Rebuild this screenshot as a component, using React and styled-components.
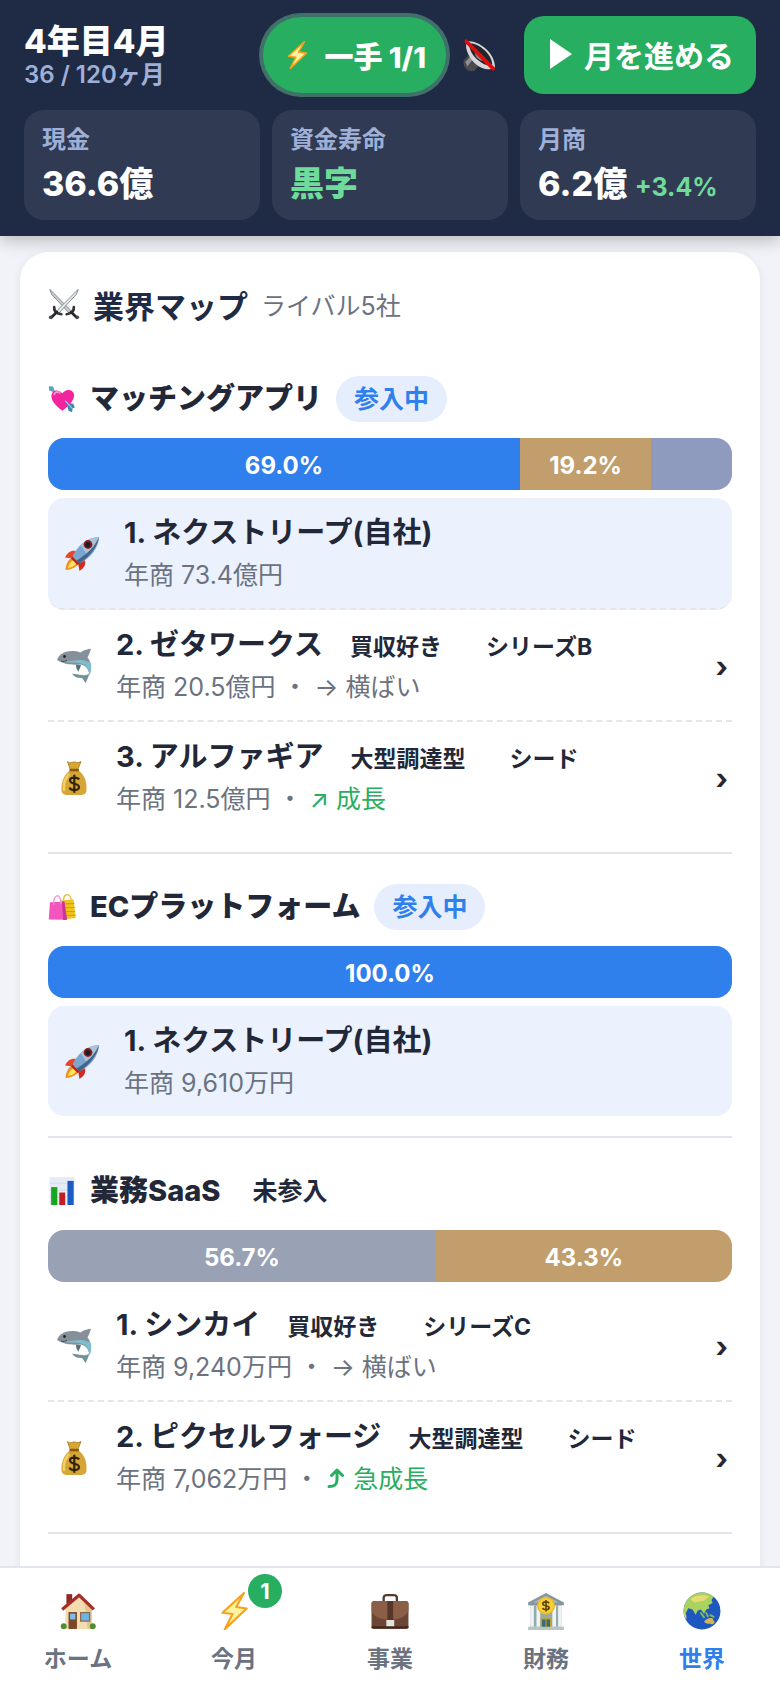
import { useState } from "react";
import styled, { createGlobalStyle } from "styled-components";

const GlobalStyle = createGlobalStyle`
    * {
        box-sizing: border-box;
    }
    body {
        margin: 0;
        background: #f1f3f8;
        color: #232838;
        font-family: Inter, "Noto Sans CJK JP", sans-serif;
    }
    button {
        font-family: inherit;
        color: inherit;
        border: none;
        background: none;
        padding: 0;
        cursor: pointer;
    }
`;

const markets = [
    {
        id: "match",
        icon: "heart",
        name: "マッチングアプリ",
        entered: true,
        shares: [
            { value: 69, color: "#2f80ed" },
            { value: 19.2, color: "#c19e6b" },
            { value: 11.8, color: "#8e9bbf" },
        ],
        companies: [
            { rank: 1, name: "ネクストリープ(自社)", icon: "rocket", sales: "73.4億円", own: true },
            { rank: 2, name: "ゼタワークス", icon: "shark", sales: "20.5億円", type: "買収好き", stage: "シリーズB", trend: "flat" },
            { rank: 3, name: "アルファギア", icon: "money", sales: "12.5億円", type: "大型調達型", stage: "シード", trend: "up" },
        ],
    },
    {
        id: "ec",
        icon: "bags",
        name: "ECプラットフォーム",
        entered: true,
        shares: [{ value: 100, color: "#2f80ed" }],
        companies: [
            { rank: 1, name: "ネクストリープ(自社)", icon: "rocket", sales: "9,610万円", own: true },
        ],
    },
    {
        id: "saas",
        icon: "chart",
        name: "業務SaaS",
        entered: false,
        shares: [
            { value: 56.7, color: "#99a1b5" },
            { value: 43.3, color: "#c19e6b" },
        ],
        companies: [
            { rank: 1, name: "シンカイ", icon: "shark", sales: "9,240万円", type: "買収好き", stage: "シリーズC", trend: "flat" },
            { rank: 2, name: "ピクセルフォージ", icon: "money", sales: "7,062万円", type: "大型調達型", stage: "シード", trend: "surge" },
        ],
    },
];

const trends = {
    flat: { label: "→ 横ばい", color: "#6b7280" },
    up: { label: "↗ 成長", color: "#27ae60" },
    surge: { label: " 急成長", color: "#27ae60", curved: true },
};

const tabs = [
    { id: "home", label: "ホーム", icon: "house" },
    { id: "month", label: "今月", icon: "bolt", badge: 1 },
    { id: "business", label: "事業", icon: "briefcase" },
    { id: "finance", label: "財務", icon: "bank" },
    { id: "world", label: "世界", icon: "globe" },
];

// all drawings share a 36x36 box
const drawings = {
    bolt: (
        <path d="M27.5 1 7 19.6l9.6 1.2L9.2 35.4 30 15.6l-10-1.4z" fill="#fff3a0" stroke="#f6a21c" strokeWidth="2" strokeLinejoin="round" />
    ),
    mute: (
        <>
            <path d="M2 23.5 8 17.5l11 10-5.5 6.8c-3 1.8-7.6.6-9.8-2.4C1.6 29 1 26 2 23.5z" fill="#4a4b4f" />
            <path d="M3.5 25.5 8.5 20l3 2.6-5.8 7.6z" fill="#8d8f94" />
            <path d="M5 4C14 1 35 14 35 31c-6 4-14 2-20-3C9 23 2 12 5 4z" fill="#d4d6da" />
            <path d="M8 6c7-2 24 10 24 22-4 2-10 0-14-4C12 20 7 12 8 6z" fill="#242529" />
            <path d="M14 15c4-1 10 4 11 9-3 1-6.5-.5-8.5-2.5S13.3 17 14 15z" fill="#85878d" />
            <path d="M4.5 3.5 33 32.5" stroke="#e20a0a" strokeWidth="4" strokeLinecap="round" />
        </>
    ),
    swords: (
        <>
            <path d="M2 1.5 26.5 26 24 28.5 4 7z" fill="#c7cdd2" stroke="#7d858c" strokeWidth="1" />
            <path d="M34 1.5 9.5 26l2.5 2.5L32 7z" fill="#e3e8eb" stroke="#7d858c" strokeWidth="1" />
            <path d="M7 21.5c-.5 3.5 1 7 8 8M29 21.5c.5 3.5-1 7-8 8" fill="none" stroke="#303236" strokeWidth="3" strokeLinecap="round" />
            <path d="M10 27 3.5 33.5M26 27l6.5 6.5" stroke="#26282c" strokeWidth="3" strokeLinecap="round" />
            <circle cx="3" cy="33" r="2" fill="#44474c" />
            <circle cx="33" cy="33" r="2" fill="#44474c" />
        </>
    ),
    heart: (
        <>
            <path d="M1 1.5 6.5 2l2 5.5L12 12l-2 1-4.5-4.5L1.5 7z" fill="#5a9fc0" />
            <path d="M18.5 33C9 26.5 3.5 19.5 4.5 12.5 5.3 6.5 14 5 18.5 11 22 4.5 32 4.8 33.5 12c1.2 7.5-7.5 15.5-15 21z" fill="#f2259f" />
            <path d="M8 12c1-3 4.5-4 7-2" fill="none" stroke="#ff8cd0" strokeWidth="2.4" strokeLinecap="round" />
            <path d="M22 20l4 3 6.5 1 2 5-3 .8L31 35l-4.5-2-2-7z" fill="#3c86ab" />
            <path d="M22 20l9 10" stroke="#9bd0e6" strokeWidth="1.5" />
        </>
    ),
    bags: (
        <>
            <path d="M16 9.5 33 8.5 35.5 32 20 34z" fill="#f0c419" />
            <path d="M20 14l14-.5M20 19l14.5-.3M20 24l15-.3M20 29l15.4-.6" stroke="#d79a10" strokeWidth="1.4" />
            <path d="M20 11c-.5-11 9.5-12 9.8-1" fill="none" stroke="#f3bd3c" strokeWidth="1.8" />
            <path d="M2.5 12 21 11l3.5 23.5L1 34z" fill="#f354bd" />
            <path d="M18 11.2 21 11l3.5 23.5-5 .2z" fill="#c93694" />
            <path d="M7.5 15C6 1 16.5-1 16.8 14" fill="none" stroke="#f49ac4" strokeWidth="1.8" />
        </>
    ),
    chart: (
        <>
            <path d="M2 0h32v36H2z" fill="#e6ecf5" />
            <path d="M2 8h32M2 17h32M2 26h32" stroke="#cfd8e6" strokeWidth="1" />
            <path d="M4 13h8v23H4z" fill="#19a51f" />
            <path d="M14.5 20h7.5v16h-7.5z" fill="#c41c22" />
            <path d="M25 5h8v31h-8z" fill="#1b5bc4" />
        </>
    ),
    rocket: (
        <>
            <path d="M12 15C7 14 3.5 16.5 1 21.5l8 1z" fill="#e8452b" />
            <path d="M21 24c1 5-1 8-5.5 11L14 27z" fill="#d42a1c" />
            <path d="M9 21c-4 1.5-7 6-7.5 13C8 33.5 13 31 15 27z" fill="#f58d20" />
            <path d="M9.5 24c-3 1.5-5 4.5-5.5 8 4.5-.5 7-2.5 8.5-5z" fill="#ffe65a" />
            <path d="M35 1C24 1.5 14 8.5 8.5 20.5l7 7C27 22 34.5 12 35 1z" fill="#7aa6cf" />
            <path d="M35 1c-7 .4-13.5 3.2-18.5 8L24 20c6.5-5 10.7-12 11-19z" fill="#a9c3da" />
            <path d="M35 1c-1 9-7.5 18-19.5 26.5l-3-3C24 18 31 10 35 1z" fill="#44648a" />
            <circle cx="24" cy="8.5" r="4.4" fill="#8e1a1a" />
            <circle cx="23.8" cy="8.7" r="2.6" fill="#1c1d26" />
            <path d="m8.5 20.5 7 7-2 1.5-6.5-6.5z" fill="#b3242a" />
        </>
    ),
    shark: (
        <>
            <path d="M1 12C4 4 14 1 24.5 4.5 28 2 32 .8 35 .8c-.8 3-2 6-3.5 8.7C36 15 36 21 33.500 27c-1.500-8-5-10-9.500-10.500-9 .5-15.500 0-23-4.500z" fill="#86909a" />
            <path d="M4 13c8 3 16 0 23 3 4 1.800 6 5.500 6.500 11 2-4 2.300-8.500.5-13-3 0-5-2-9-2-7 0-13 2.500-21 1z" fill="#7cc0cf" />
            <path d="M20 16.5c0 3 .5 5 2.5 7 .8-2.5 2-4 2.5-6.5z" fill="#56707c" />
            <path d="M33.5 25c-2 2-4 2.5-7.5 2-3-.5-6.5-.8-10-1.5 2.5 4 6 5 10 4.5l3.5 5c1.5-3 3-6 4-10z" fill="#74929b" />
            <circle cx="8.5" cy="8.5" r="1.4" fill="#20252a" />
            <path d="M5 13c2.5 1 4.5.5 6-1" fill="none" stroke="#40484f" strokeWidth="1" />
        </>
    ),
    money: (
        <>
            <path d="M11.5 1.5c3 2.5 4 .5 6.5.5s3.5 1.5 7-.5L22 9h-8z" fill="#d9a630" stroke="#a4741b" strokeWidth=".8" />
            <path d="M14 10.5h8.5c7 5 8.5 12.5 8 20-.2 3.5-3 4.5-6 4.5h-13c-3.500 0-6-1.500-6-5C5.200 22 7.500 15.500 14 10.500z" fill="#d6a537" />
            <path d="M12.5 15c-4 4-5 10-4.5 15" fill="none" stroke="#f1d067" strokeWidth="2.5" strokeLinecap="round" />
            <path d="M13.5 9h9.5v2.4h-9.5z" fill="#8a5c14" />
            <path d="M23 19.500c-1-2.500-9-3-9 1s9 2.500 9 6.500-8.500 4-9.500.5M18.300 14.800v18" fill="none" stroke="#332308" strokeWidth="2.2" />
        </>
    ),
    house: (
        <>
            <path d="M7 2h5.5v9H7z" fill="#8e2b27" />
            <path d="M6 14 19 4l12 10v21H6z" fill="#f3ddb0" />
            <path d="M24 9l7 5v21h-4z" fill="#e3c791" />
            <path d="M3 16.5 19 3l14 13.5" fill="none" stroke="#a72c28" strokeWidth="3" strokeLinejoin="round" />
            <path d="M9 19h8v16H9z" fill="#7b4729" />
            <path d="M10.5 20.5h5v5.5h-5z" fill="#7fbce8" />
            <path d="M20.5 19.5H29v8h-8.5z" fill="#6fb3e6" stroke="#8b6b4c" strokeWidth="1.2" />
            <circle cx="4.5" cy="32.5" r="2.8" fill="#4f8d33" />
            <circle cx="32" cy="32.5" r="2.8" fill="#4f8d33" />
        </>
    ),
    briefcase: (
        <>
            <path d="M12 9V5.5C12 3.5 13.5 3 15 3h6.5C23 3 24.5 3.5 24.5 5.5V9" fill="none" stroke="#553a2c" strokeWidth="2.2" />
            <path d="M3 8.5h30c1.5 0 2.5 1 2.5 2.5v22c0 1.2-.8 2-2 2h-31c-1.2 0-2-.8-2-2V11C.5 9.500 1.500 8.500 3 8.500z" fill="#6b4634" />
            <path d="M3 8.5h30c1.5 0 2.5 1 2.5 2.5v7c-4 7-10 8-17.5 8S4 25 .5 18v-7C.5 9.500 1.500 8.500 3 8.500z" fill="#8a5e47" />
            <path d="M15.5 8.5H21V28h-5.5z" fill="#573627" />
            <path d="M14.5 26.5H22v7h-7.5z" fill="#e5e2dc" />
            <path d="M.5 32.5h35v1.8H.5z" fill="#3f281d" />
        </>
    ),
    bank: (
        <>
            <path d="M18 1 35 10v2.5H1V10z" fill="#86979b" />
            <path d="M18 3.5 30 10H6z" fill="#a9b9ba" />
            <path d="M3 12.5h30V33H3z" fill="#93aaae" />
            <path d="M3 13h3.5v20H3zM9 13h3.5v20H9zM24 13h3.5v20H24zM29.5 13H33v20h-3.5z" fill="#f0f3f4" />
            <path d="M13.5 25.5h9V34h-9z" fill="#3d6b70" stroke="#c9a227" strokeWidth="1.3" />
            <path d="M18 26v8" stroke="#c9a227" strokeWidth="1" />
            <path d="M1 33h34v3H1z" fill="#b9c4c6" />
            <circle cx="18" cy="13" r="8.5" fill="#f0b921" />
            <circle cx="18" cy="13" r="7" fill="#f8cf3b" />
            <path d="M21 10.8c-.8-2-6-2-6 .4s6 1.5 6 3.8-5.3 2.5-6.2.3M18 7.5v11" fill="none" stroke="#5b4208" strokeWidth="1.5" />
        </>
    ),
    globe: (
        <>
            <circle cx="18" cy="18" r="17.5" fill="#1d58c0" />
            <path d="M2 11C5 4 12 .5 18 .5c5 0 8 1 11 4l-2 3 1 3-4 2 1 3-3 1-2 4-3-4-3 1-2 4-3-5-4-1-2 4-2 1c-.6-3-.2-6.5 1-9.5z" fill="#a9d25e" />
            <path d="M7 7c4-4 12-5 18-3l-5 4-9 2z" fill="#e5dd74" />
            <path d="M.6 19c2 0 3 3 2.5 7C1.5 24 .6 22 .6 19z" fill="#d8cf62" />
            <path d="M17 20l3 4M22 20l1.5 3M26 22l3 1.5" stroke="#83b95a" strokeWidth="1.8" strokeLinecap="round" />
            <path d="M20 28c2-3 6-4 8-3l2 4c-1 2-3 2-4.500.8-2 .4-4.500.2-5.500-1.800z" fill="#d5b552" />
        </>
    ),
};

function Drawing({ name, size }) {
    return (
        <DrawingSvg viewBox="0 0 36 36" $size={size} aria-hidden="true">
            {drawings[name]}
        </DrawingSvg>
    );
}

function CompanyRow({ company }) {
    const trend = trends[company.trend];

    return (
        <CompanyItem $own={company.own}>
            <CompanyBody as={company.own ? "div" : "button"} $own={company.own}>
                <CompanyIcon>
                    <Drawing name={company.icon} size={36} />
                </CompanyIcon>
                <CompanyText>
                    <CompanyHead>
                        <CompanyName>{company.rank}. {company.name}</CompanyName>
                        {company.type && <Tag>{company.type}</Tag>}
                        {company.stage && <Tag>{company.stage}</Tag>}
                    </CompanyHead>
                    <CompanySales>
                        年商 {company.sales}
                        {trend && (
                            <>
                                {" ・ "}
                                <Trend $color={trend.color}>
                                    {trend.curved && (
                                        <CurvedArrow viewBox="0 0 20 20" aria-hidden="true">
                                            <path d="M3 18.5c6 0 8-2 8-7V2M5.5 7.5 11 2l5.5 5.5" />
                                        </CurvedArrow>
                                    )}
                                    {trend.label}
                                </Trend>
                            </>
                        )}
                    </CompanySales>
                </CompanyText>
                {!company.own && <Chevron>›</Chevron>}
            </CompanyBody>
        </CompanyItem>
    );
}

function App() {
    const [tab, setTab] = useState("world");

    return (
        <Shell>
            <GlobalStyle />
            <Header>
                <HeaderTop>
                    <DateBlock>
                        <DateTitle>4年目4月</DateTitle>
                        <DateSub>36 / 120ヶ月</DateSub>
                    </DateBlock>
                    <MoveButton>
                        <Drawing name="bolt" size={28} />
                        一手 1/1
                    </MoveButton>
                    <SoundButton aria-label="サウンド">
                        <Drawing name="mute" size={34} />
                    </SoundButton>
                    <NextButton>
                        <PlayIcon viewBox="0 0 22 30" aria-hidden="true">
                            <path d="M0 0l22 15L0 30z" fill="#fff" />
                        </PlayIcon>
                        月を進める
                    </NextButton>
                </HeaderTop>
                <Stats>
                    <Stat>
                        <StatLabel>現金</StatLabel>
                        <StatValue>36.6億</StatValue>
                    </Stat>
                    <Stat>
                        <StatLabel>資金寿命</StatLabel>
                        <StatValue $good>黒字</StatValue>
                    </Stat>
                    <Stat>
                        <StatLabel>月商</StatLabel>
                        <StatValue>6.2億 <Growth>+3.4%</Growth></StatValue>
                    </Stat>
                </Stats>
            </Header>

            <Main>
                <Card>
                    <CardHead>
                        <Drawing name="swords" size={32} />
                        <CardTitle>業界マップ</CardTitle>
                        <CardNote>ライバル5社</CardNote>
                    </CardHead>
                    {markets.map((market) => (
                        <Market key={market.id}>
                            <MarketHead>
                                <Drawing name={market.icon} size={28} />
                                <MarketName>{market.name}</MarketName>
                                <Status $entered={market.entered}>
                                    {market.entered ? "参入中" : "未参入"}
                                </Status>
                            </MarketHead>
                            <ShareBar>
                                {market.shares.map((share) => (
                                    <Share
                                        key={share.value}
                                        style={{ width: `${share.value}%`, background: share.color }}
                                    >
                                        {share.value > 15 && `${share.value.toFixed(1)}%`}
                                    </Share>
                                ))}
                            </ShareBar>
                            <CompanyList>
                                {market.companies.map((company) => (
                                    <CompanyRow key={company.rank} company={company} />
                                ))}
                            </CompanyList>
                        </Market>
                    ))}
                </Card>
            </Main>

            <TabBar>
                {tabs.map((item) => (
                    <TabButton key={item.id} $active={tab === item.id} onClick={() => setTab(item.id)}>
                        <TabIcon>
                            <Drawing name={item.icon} size={38} />
                            {item.badge && <Badge>{item.badge}</Badge>}
                        </TabIcon>
                        {item.label}
                    </TabButton>
                ))}
            </TabBar>
        </Shell>
    );
}

const Shell = styled.div`
    display: flex;
    flex-direction: column;
    height: 100vh;
`;

const DrawingSvg = styled.svg`
    display: block;
    flex: none;
    width: ${(props) => props.$size}px;
    height: ${(props) => props.$size}px;
`;

const Header = styled.header`
    position: relative;
    z-index: 1;
    flex: none;
    padding: 16px 24px;
    background: #1f2a44;
    box-shadow: 0 4px 16px rgba(0, 0, 0, 0.25);
`;

const HeaderTop = styled.div`
    display: flex;
    align-items: center;
    gap: 12px;
    margin-bottom: 16px;
`;

const DateBlock = styled.div`
    flex: 1;
`;

const DateTitle = styled.div`
    font-size: 33px;
    line-height: 40px;
    font-weight: 800;
    white-space: nowrap;
    color: #fff;
`;

const DateSub = styled.div`
    font-size: 24px;
    line-height: 28px;
    font-weight: 600;
    white-space: nowrap;
    color: #9fb0d8;
`;

const MoveButton = styled.button`
    display: flex;
    align-items: center;
    gap: 13px;
    height: 76px;
    padding: 0 20px;
    border-radius: 38px;
    background: #27ae60;
    box-shadow: 0 0 0 4px #40706a;
    font-size: 29px;
    font-weight: 800;
    white-space: nowrap;
    color: #fff;
`;

const SoundButton = styled.button`
    padding: 0 16px 0 4px;
`;

const NextButton = styled.button`
    display: flex;
    align-items: center;
    gap: 12px;
    height: 78px;
    padding: 0 22px 2px 26px;
    border-radius: 20px;
    background: #27ae60;
    font-size: 30px;
    font-weight: 700;
    white-space: nowrap;
    color: #fff;
`;

const PlayIcon = styled.svg`
    width: 22px;
    height: 30px;
`;

const Stats = styled.div`
    display: grid;
    grid-template-columns: repeat(3, 1fr);
    gap: 12px;
`;

const Stat = styled.div`
    padding: 15px 18px 11px;
    border-radius: 20px;
    background: #303a53;
`;

const StatLabel = styled.div`
    margin-bottom: 4px;
    font-size: 24px;
    line-height: 30px;
    font-weight: 600;
    color: #9fb0d8;
`;

const StatValue = styled.div`
    font-size: 34px;
    line-height: 50px;
    font-weight: 800;
    white-space: nowrap;
    color: ${(props) => (props.$good ? "#6fdb9b" : "#fff")};
`;

const Growth = styled.span`
    font-size: 25px;
    line-height: 1;
    font-weight: 700;
    color: #6fdb9b;
`;

const Main = styled.main`
    flex: 1;
    min-height: 0;
    padding: 16px 20px;
    overflow-y: auto;
    scrollbar-width: none;
`;

const Card = styled.section`
    padding: 28px 28px 80px;
    border-radius: 28px;
    background: #fff;
    box-shadow: 0 2px 8px rgba(31, 42, 68, 0.08);
`;

const CardHead = styled.div`
    display: flex;
    align-items: center;
    gap: 13px;
    height: 48px;
    margin-bottom: 18px;
`;

const CardTitle = styled.h2`
    margin: 0;
    font-size: 31px;
    font-weight: 700;
    color: #1f2a44;
`;

const CardNote = styled.span`
    font-size: 25px;
    color: #6b7280;
`;

const Market = styled.section`
    padding: 30px 0 20px;
    border-bottom: 2px solid #e2e5ee;
`;

const MarketHead = styled.div`
    display: flex;
    align-items: center;
    gap: 14px;
    margin-bottom: 16px;
`;

const MarketName = styled.h3`
    margin: 0;
    font-size: 29px;
    line-height: 46px;
    font-weight: 800;
`;

const Status = styled.span`
    padding: 0 18px;
    border-radius: 23px;
    font-size: 25px;
    line-height: 46px;
    font-weight: 600;
    color: ${(props) => (props.$entered ? "#2f80ed" : "inherit")};
    background: ${(props) => (props.$entered ? "#e6eefd" : "transparent")};
`;

const ShareBar = styled.div`
    display: flex;
    height: 52px;
    margin-bottom: 8px;
    border-radius: 16px;
    overflow: hidden;
`;

const Share = styled.div`
    display: flex;
    align-items: center;
    justify-content: center;
    padding-top: 2px;
    font-size: 24px;
    font-weight: 700;
    color: #fff;
`;

const CompanyList = styled.ul`
    margin: 0;
    padding: 0;
    list-style: none;
`;

const CompanyItem = styled.li`
    border-bottom: 2px dashed #e4e6ec;
    border-radius: ${(props) => (props.$own ? "16px" : "0")};
    background: ${(props) => (props.$own ? "#ebf2fe" : "transparent")};
    &:last-child {
        border-bottom: none;
    }
`;

const CompanyBody = styled.div`
    display: flex;
    align-items: center;
    gap: 16px;
    width: 100%;
    padding: ${(props) => (props.$own ? "14px 8px 12px" : "14px 4px 12px 0")};
    text-align: left;
`;

const CompanyIcon = styled.span`
    display: flex;
    justify-content: center;
    flex: none;
    width: 52px;
`;

const CompanyText = styled.span`
    flex: 1;
    min-width: 0;
`;

const CompanyHead = styled.span`
    display: flex;
    align-items: baseline;
    gap: 10px;
`;

const CompanyName = styled.span`
    font-size: 29px;
    line-height: 42px;
    font-weight: 700;
`;

const Tag = styled.span`
    padding: 0 17px;
    font-size: 23px;
    line-height: 28px;
    font-weight: 700;
`;

const CompanySales = styled.span`
    display: block;
    font-size: 25px;
    line-height: 42px;
    color: #6b7280;
`;

const Trend = styled.span`
    color: ${(props) => props.$color};
`;

const CurvedArrow = styled.svg`
    width: 20px;
    height: 20px;
    fill: none;
    stroke: currentColor;
    stroke-width: 3px;
    stroke-linecap: round;
    stroke-linejoin: round;
`;

const Chevron = styled.span`
    font-size: 29px;
    font-weight: 700;
`;

const TabBar = styled.nav`
    display: grid;
    grid-template-columns: repeat(5, 1fr);
    flex: none;
    z-index: 1;
    border-top: 2px solid #e2e5ee;
    background: #fff;
`;

const TabButton = styled.button`
    display: flex;
    flex-direction: column;
    align-items: center;
    gap: 12px;
    padding: 24px 0 12px;
    font-size: 23px;
    line-height: 34px;
    font-weight: 600;
    color: ${(props) => (props.$active ? "#2f80ed" : "#6b7280")};
`;

const TabIcon = styled.span`
    position: relative;
`;

const Badge = styled.span`
    position: absolute;
    top: -18px;
    left: 33px;
    width: 34px;
    height: 34px;
    border-radius: 17px;
    background: #27ae60;
    font-size: 22px;
    font-weight: 700;
    text-align: center;
    color: #fff;
`;

export default App;
